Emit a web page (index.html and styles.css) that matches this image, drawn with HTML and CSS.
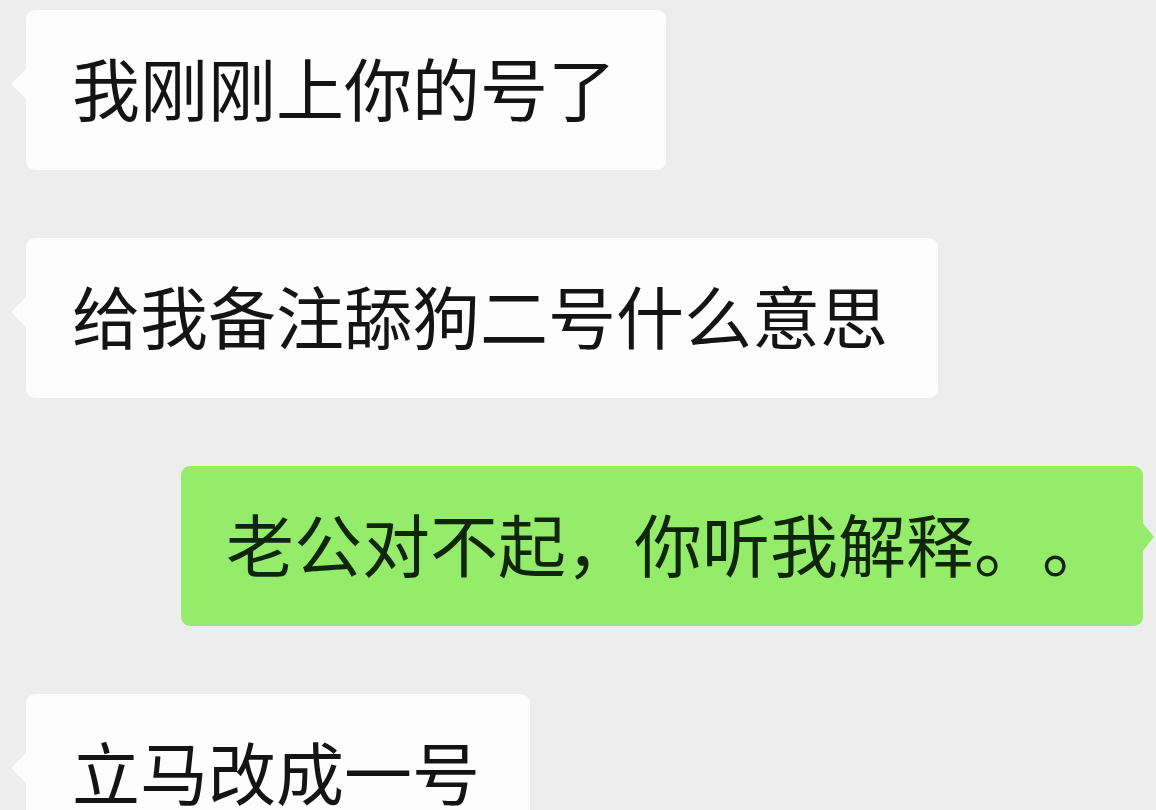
FILE: index.html
```html
<!DOCTYPE html>
<html lang="zh-CN">
<head>
    <meta charset="UTF-8">
    <meta name="viewport" content="width=device-width, initial-scale=1.0">
    <title>聊天记录</title>
    <link rel="stylesheet" href="styles.css">
</head>
<body>
    <div class="chat">
        <div class="msg msg-in">我刚刚上你的号了</div>
        <div class="msg msg-in">给我备注舔狗二号什么意思</div>
        <div class="msg msg-out">老公对不起，你听我解释。。</div>
        <div class="msg msg-in">立马改成一号</div>
    </div>
</body>
</html>
```

FILE: styles.css
```css
/* Базовые настройки */
body, html {
    margin: 0;
    padding: 0;
    width: 100%;
    height: 100%;
    overflow: hidden;
    background: #ededed;
    font-family: "Noto Sans CJK SC", "Noto Sans", sans-serif;
}

/* Лента сообщений */
.chat {
    display: flex;
    flex-direction: column;
    align-items: flex-start;
    gap: 68px;
    padding: 10px 13px 0 26px;
}

.msg {
    position: relative;
    box-sizing: border-box;
    height: 160px;
    line-height: 154px;
    padding-bottom: 6px;
    font-size: 68px;
    white-space: nowrap;
    text-spacing-trim: space-all; /* полноширинные «。。» */
    border-radius: 9px;
}

/* Входящие — белые, хвостик слева */
.msg-in {
    background: #fdfdfd;
    color: #141414;
    padding-left: 46px;
    padding-right: 50px;
}

.msg-in::before {
    content: "";
    position: absolute;
    left: -15px;
    top: 58px;
    width: 16px;
    height: 32px;
    background: #fdfdfd;
    clip-path: polygon(100% 0, 10% 45%, 0 50%, 10% 55%, 100% 100%);
}

/* Исходящие — зелёные, хвостик справа */
.msg-out {
    align-self: flex-end;
    background: #95ec6b;
    color: #0f260b;
    padding-left: 45px;
    padding-right: 33px;
}

.msg-out::after {
    content: "";
    position: absolute;
    right: -11px;
    top: 56px;
    width: 12px;
    height: 30px;
    background: #95ec6b;
    clip-path: polygon(0 0, 90% 45%, 100% 50%, 90% 55%, 0 100%);
}
```
